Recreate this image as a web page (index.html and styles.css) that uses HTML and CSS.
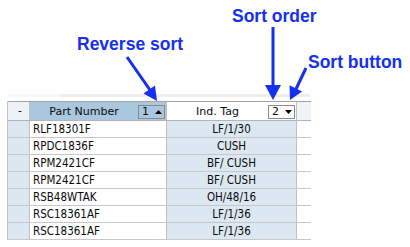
FILE: index.html
```html
<!DOCTYPE html>
<html>
<head>
<meta charset="utf-8">
<link rel="stylesheet" href="styles.css">
</head>
<body>
<div class="annot">
  <span class="label label-reverse">Reverse sort</span>
  <span class="label label-order">Sort order</span>
  <span class="label label-button">Sort button</span>
</div>
<div class="band"></div>
<div class="grid">
  <div class="row head">
    <div class="cell c1 h1">-</div>
    <div class="cell c2 h2">
      <span class="htext">Part Number</span>
      <span class="sortbox">1<svg class="tri" width="7" height="4" viewBox="0 0 7 4"><polygon points="0,4 7,4 3.5,0" fill="#000"/></svg></span>
    </div>
    <div class="cell c3 h3">
      <span class="htext">Ind. Tag</span>
      <span class="sortbox">2<svg class="tri" width="7" height="4" viewBox="0 0 7 4"><polygon points="0,0 7,0 3.5,4" fill="#000"/></svg></span>
    </div>
    <div class="cell c4 h4"></div>
  </div>
  <div class="row"><div class="cell c1"></div><div class="cell c2">RLF18301F</div><div class="cell c3">LF/1/30</div><div class="cell c4"></div></div>
  <div class="row"><div class="cell c1"></div><div class="cell c2">RPDC1836F</div><div class="cell c3">CUSH</div><div class="cell c4"></div></div>
  <div class="row"><div class="cell c1"></div><div class="cell c2">RPM2421CF</div><div class="cell c3">BF/ CUSH</div><div class="cell c4"></div></div>
  <div class="row"><div class="cell c1"></div><div class="cell c2">RPM2421CF</div><div class="cell c3">BF/ CUSH</div><div class="cell c4"></div></div>
  <div class="row"><div class="cell c1"></div><div class="cell c2">RSB48WTAK</div><div class="cell c3">OH/48/16</div><div class="cell c4"></div></div>
  <div class="row"><div class="cell c1"></div><div class="cell c2">RSC18361AF</div><div class="cell c3">LF/1/36</div><div class="cell c4"></div></div>
  <div class="row"><div class="cell c1"></div><div class="cell c2">RSC18361AF</div><div class="cell c3">LF/1/36</div><div class="cell c4"></div></div>
</div>
<svg class="arrows" width="410" height="247" viewBox="0 0 410 247">
  <g fill="#1530f0" stroke="#1530f0">
    <line x1="127" y1="57" x2="150" y2="90" stroke-width="3"/>
    <polygon points="157,101 143.5,93.5 155,85.5" stroke="none"/>
    <line x1="273" y1="27" x2="273" y2="87" stroke-width="3"/>
    <polygon points="265,85 281,85 273,100" stroke="none"/>
    <line x1="306" y1="68" x2="296" y2="89" stroke-width="3"/>
    <polygon points="290,100 289.5,85.3 302.1,91.5" stroke="none"/>
  </g>
</svg>
</body>
</html>
```
FILE: styles.css
```css
html, body {
  margin: 0;
  padding: 0;
  background: #ffffff;
}
body {
  position: relative;
  width: 410px;
  height: 247px;
  overflow: hidden;
}
.annot {
  position: relative;
  height: 94px;
}
.label {
  position: absolute;
  font-family: "Liberation Sans", Arial, sans-serif;
  font-weight: bold;
  font-size: 17.5px;
  line-height: 20px;
  color: #1530f0;
  white-space: nowrap;
}
.label-reverse { left: 77px; top: 34px; }
.label-order { left: 232px; top: 6px; }
.label-button { left: 308px; top: 52px; }
.band {
  height: 3px;
  width: 303px;
  margin: 0 0 4px 7px;
  background: linear-gradient(to right, #f7f7f7 0 53px, #eeeeee 53px);
}
.grid {
  margin-left: 7px;
  width: 303px;
  border-left: 1px solid #c4c4c4;
  font-family: "DejaVu Sans Condensed", "DejaVu Sans", sans-serif;
  font-size: 11.5px;
  color: #0a0a0a;
}
.row {
  display: flex;
  height: 16px;
  border-bottom: 1px solid #c8c8c8;
}
.row.head {
  height: 18px;
  border-top: 1px solid #a4a4a4;
  border-bottom: 1px solid #b4b4b4;
  font-family: "DejaVu Sans", Verdana, sans-serif;
  font-size: 11px;
}
.cell {
  line-height: 16px;
  white-space: nowrap;
  overflow: hidden;
  flex: none;
}
.c1 { width: 21px; border-right: 1px solid #c0c0c0; background: #dce8f1; }
.c2 { width: 133px; padding-left: 3px; border-right: 1px solid #c0c0c0; background: #ffffff; }
.c3 { width: 129px; border-right: 1px solid #c0c0c0; background: #dce8f1; text-align: center; }
.c4 { width: 14px; background: #ffffff; }
.head .cell { line-height: 18px; }
.h1 { background: #edf2f7; text-align: center; padding-left: 3px; width: 18px; }
.h2, .h3 {
  display: flex;
  align-items: center;
}
.h2 { width: 136px; padding-left: 0; background: #a9c8df; }
.h3 { background: #ffffff; }
.h4 { background: #eef3f7; }
.htext {
  flex: 1 1 0;
  min-width: 0;
  text-align: center;
  padding-top: 2px;
}
.sortbox {
  flex: none;
  display: flex;
  align-items: center;
  box-sizing: border-box;
  width: 27px;
  height: 14px;
  margin-right: 1px;
  margin-top: 1px;
  padding-left: 3px;
  border: 1px solid #8a8a8a;
  line-height: 12px;
}
.tri {
  display: block;
  margin-left: 6px;
}
.arrows {
  position: absolute;
  left: 0;
  top: 0;
  pointer-events: none;
}
```
